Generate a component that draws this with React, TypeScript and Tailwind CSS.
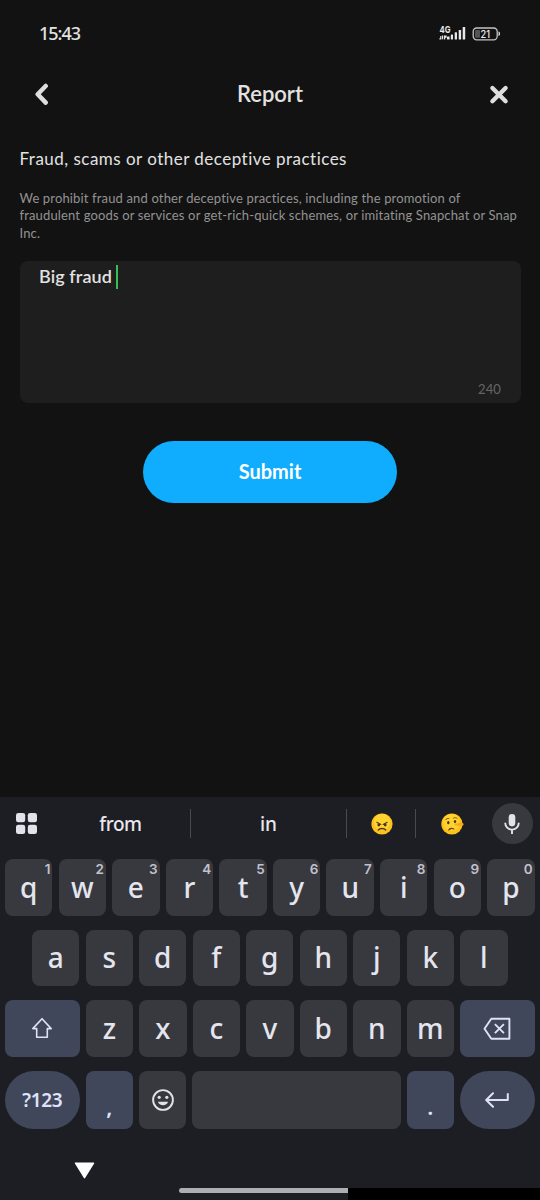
import React from 'react';

interface KeyProps {
  label: string;
  hint?: string;
}

const Key: React.FC<KeyProps> = ({ label, hint }) => (
  <button className="relative flex h-full w-[47.4px] items-center justify-center rounded-lg bg-[#38393e] text-[28px] leading-none font-medium text-[#e4e5ee]">
    <span className="-mt-0.5">{label}</span>
    {hint && <span className="absolute top-[4px] right-[2px] font-[Inter,sans-serif] text-[13.5px] leading-none font-semibold text-[#c0c1cd]">{hint}</span>}
  </button>
);

const SignalIcon = () => (
  <svg className="h-[17px] w-[28px]" viewBox="0 0 28 17" fill="#e8e8e8">
    <path d="M1.2 11h1.2v3.6H.4v-1.4h.8zM3 10.6h1.2v3.6H3zM5 10.6h2.6v2.2H6.2v1.6H5z" />
    <rect x="8" y="11.6" width="2.6" height="3" rx=".5" />
    <rect x="11.8" y="9.5" width="2.2" height="5.1" rx=".5" />
    <rect x="15.7" y="7.3" width="2.3" height="7.3" rx=".5" />
    <rect x="19.7" y="5" width="2.4" height="9.6" rx=".5" />
    <rect x="23.7" y="2" width="2.5" height="12.6" rx=".5" />
    <text x="0.5" y="8.2" fontSize="9.5" fontWeight="700" fontFamily="Inter, sans-serif" textLength="11" lengthAdjust="spacingAndGlyphs">4G</text>
  </svg>
);

const BatteryIcon = () => (
  <svg className="h-[14px] w-[30px]" viewBox="0 0 30 14">
    <rect x="1.2" y="1" width="24" height="11.8" rx="3.5" fill="none" stroke="#c4c4c4" strokeWidth="1.3" />
    <rect x="3" y="3" width="5" height="7.8" rx="1" fill="#555" />
    <path d="M26.5 4.5c1.2.4 1.5 1 1.5 2.3s-.3 1.9-1.5 2.3z" fill="#ddd" />
    <text x="8.5" y="10.6" fontSize="10" fontWeight="500" fill="#eee" fontFamily="Inter, sans-serif" textLength="9.5" lengthAdjust="spacingAndGlyphs">21</text>
  </svg>
);

const AngryFace = () => (
  <svg className="h-[22px] w-[22px]" viewBox="0 0 22 22">
    <circle cx="11" cy="11" r="10.6" fill="#fcc21b" />
    <circle cx="11" cy="9" r="8.2" fill="#ffd32f" />
    <g fill="none" stroke="#493522" strokeLinecap="round">
      <path d="M5.8 9.3l4 2.1M16.2 9.3l-4 2.1" strokeWidth="1.1" />
      <path d="M7.3 17c1.5-2 5.9-2 7.4 0" strokeWidth="1.3" />
    </g>
    <circle cx="7.8" cy="12" r="1.4" fill="#493522" />
    <circle cx="14.2" cy="12" r="1.4" fill="#493522" />
  </svg>
);

const LyingFace = () => (
  <svg className="h-[22px] w-[23px]" viewBox="0 0 23 22">
    <circle cx="10.9" cy="11" r="10.6" fill="#fcc21b" />
    <circle cx="10.5" cy="9.5" r="8.4" fill="#ffd32f" />
    <path d="M13.5 10.5c3 0 5.5-1.3 8-.5 1.4.6 1.4 2.3 0 2.8-2.5.7-5-.1-8-.5z" fill="#f9a919" />
    <ellipse cx="7.3" cy="9.7" rx="1.2" ry="1.6" fill="#493522" />
    <ellipse cx="14" cy="8.5" rx="1.2" ry="1.5" fill="#493522" />
    <g fill="none" stroke="#6b4a1b" strokeLinecap="round">
      <path d="M4.5 6.8c.8-1.1 2-1.5 3.3-1.3M12.5 5c1.4-.6 2.7-.4 3.7.5" strokeWidth=".9" />
      <path d="M7.8 17c1-1.7 3.3-2 5-1" strokeWidth="1.3" />
    </g>
  </svg>
);

const Keyboard = () => (
  <div className="flex h-[403px] flex-col bg-[#1d1e23] font-['Noto_Sans',sans-serif]">
    <div className="flex h-[53px] items-center">
      <svg className="ml-4 h-[21px] w-[21px]" viewBox="0 0 21 21" fill="#e2e3ea">
        <rect width="9.2" height="9.2" rx="2.3" />
        <rect x="11.8" width="9.2" height="9.2" rx="2.3" />
        <rect y="11.8" width="9.2" height="9.2" rx="2.3" />
        <rect x="11.8" y="11.8" width="9.2" height="9.2" rx="2.3" />
      </svg>
      <span className="ml-[13px] w-[140px] pt-px pl-px text-center text-[19px] font-medium tracking-[-0.4px] text-[#e8e8ee]">from</span>
      <div className="h-[29px] w-px bg-[#494a50]" />
      <span className="w-[155px] pt-px text-center text-[19px] font-medium text-[#e8e8ee]">in</span>
      <div className="h-[29px] w-px bg-[#494a50]" />
      <div className="flex w-[68px] justify-center pl-[2px]"><AngryFace /></div>
      <div className="h-[29px] w-px bg-[#494a50]" />
      <div className="flex w-[70px] justify-center pl-[2px]"><LyingFace /></div>
      <button className="ml-[6px] flex h-[41px] w-[41px] items-center justify-center rounded-full bg-[#38393e]">
        <svg className="-ml-px h-[22px] w-[18px]" viewBox="0 0 18 22">
          <rect x="5.7" y="1" width="6.6" height="12.4" rx="3.3" fill="#e2e3ea" />
          <path d="M2.2 9.8a6.8 6.8 0 0 0 13.6 0M9 16.5v4.5" fill="none" stroke="#e2e3ea" strokeWidth="1.9" />
        </svg>
      </button>
    </div>

    <div className="mt-[9px] flex h-[57px] justify-between pr-[5.4px] pl-[5px]">
      {'qwertyuiop'.split('').map((c, i) => <Key key={c} label={c} hint={String((i + 1) % 10)} />)}
    </div>
    <div className="mt-[14px] flex h-[56px] justify-between pr-[32.4px] pl-[32px]">
      {'asdfghjkl'.split('').map((c) => <Key key={c} label={c} />)}
    </div>
    <div className="mt-[14px] flex h-[57px] justify-between pr-[5.4px] pl-[5px]">
      <button className="flex w-[74.5px] items-center justify-center rounded-lg bg-[#41475b]">
        <svg className="-mt-px h-[22px] w-[22px]" viewBox="0 0 22 22" fill="none" stroke="#dfe2f5" strokeWidth="1.6" strokeLinejoin="round">
          <path d="M11 1.7L20.2 11.6H16.3V20.2H5.7V11.6H1.8z" />
        </svg>
      </button>
      {'zxcvbnm'.split('').map((c) => <Key key={c} label={c} />)}
      <button className="flex w-[74.5px] items-center justify-center rounded-lg bg-[#41475b]">
        <svg className="h-[24px] w-[28px]" viewBox="0 0 28 24" fill="none" stroke="#dfe2f5" strokeWidth="1.9" strokeLinejoin="round">
          <path d="M8.3 1.7H26.4V21.7H8.3L1.5 11.7z" />
          <path d="M11.9 7.2l9 9M20.9 7.2l-9 9" />
        </svg>
      </button>
    </div>
    <div className="mt-[14px] flex h-[58px] justify-between pr-[5.4px] pl-[5px] text-[#dfe2f9]">
      <button className="w-[74.5px] rounded-full bg-[#41475b] text-[19px] font-semibold tracking-[-0.4px]">?123</button>
      <button className="w-[47.4px] rounded-lg bg-[#41475b] pt-3 text-[22px] font-semibold">,</button>
      <button className="flex w-[47.4px] items-center justify-center rounded-lg bg-[#38393e]">
        <svg className="-mt-px h-[22px] w-[22px]" viewBox="0 0 22 22">
          <circle cx="11" cy="11" r="9.9" fill="none" stroke="#e2e3ea" strokeWidth="1.9" />
          <circle cx="7.2" cy="8.3" r="1.6" fill="#e2e3ea" />
          <circle cx="14.8" cy="8.3" r="1.6" fill="#e2e3ea" />
          <path d="M6 12.8h10c-.8 4.5-9.2 4.5-10 0z" fill="#e2e3ea" />
        </svg>
      </button>
      <button className="w-[208.3px] rounded-lg bg-[#38393e]" />
      <button className="w-[47.4px] rounded-lg bg-[#41475b] pt-3 text-[22px] font-semibold">.</button>
      <button className="flex w-[74.5px] items-center justify-center rounded-full bg-[#41475b]">
        <svg className="h-[16px] w-[24px]" viewBox="0 0 24 16" fill="none" stroke="#dfe2f5" strokeWidth="2" strokeLinecap="round" strokeLinejoin="round">
          <path d="M8 1.2L1.2 8L8 14.8M1.2 8H22.8V2" />
        </svg>
      </button>
    </div>

    <svg className="mt-[33px] ml-[74px] h-[17px] w-[21px]" viewBox="0 0 21 17" fill="#fff" stroke="#fff" strokeWidth="1.5" strokeLinejoin="round">
      <path d="M1.5 1.2H19.5L10.5 15.6z" />
    </svg>
    <div className="mt-auto flex h-[12px]">
      <div className="ml-[178.5px] h-[5px] w-[169.5px] rounded-l-full bg-[#adaeb1]" />
      <div className="h-full flex-1 bg-black" />
    </div>
  </div>
);

const App: React.FC = () => {
  return (
    <div className="flex h-[1200px] w-[540px] flex-col overflow-hidden bg-[#121212] font-[Lato,sans-serif] text-[#e2e2e2]">
      <div className="flex h-[67px] items-center pr-[38px] pl-[39px]">
        <span className="-mt-0.5 font-['Noto_Sans',sans-serif] text-[18px] leading-none font-medium tracking-[-1px]">15:43</span>
        <div className="ml-auto flex items-center gap-[5px]">
          <SignalIcon />
          <BatteryIcon />
        </div>
      </div>

      <header className="flex h-[54px] items-center justify-between pr-[30px] pl-[34px]">
        <button>
          <svg className="h-[22px] w-[15px]" viewBox="0 0 15 22" fill="none" stroke="#dedede" strokeWidth="4.5" strokeLinecap="round" strokeLinejoin="round">
            <path d="M11.7 3L3.7 11.2L11.7 19.6" />
          </svg>
        </button>
        <h1 className="pl-[3px] text-[22px] leading-none font-semibold">Report</h1>
        <button>
          <svg className="h-[22px] w-[22px]" viewBox="0 0 22 22" fill="none" stroke="#dedede" strokeWidth="4.4" strokeLinecap="round">
            <path d="M4.4 5L17.6 18.2M17.6 5L4.4 18.2" />
          </svg>
        </button>
      </header>

      <main className="flex flex-col px-[19.5px]">
        <h2 className="mt-[27px] text-[17px] leading-[22px] tracking-[0.48px] whitespace-nowrap">Fraud, scams or other deceptive practices</h2>
        <p className="mt-[20px] text-[13px] leading-[17.3px] tracking-[0.15px] whitespace-nowrap text-[#929292]">
          We prohibit fraud and other deceptive practices, including the promotion of<br />
          fraudulent goods or services or get-rich-quick schemes, or imitating Snapchat or Snap<br />
          Inc.
        </p>
        <div className="mt-[19.1px] flex h-[142px] flex-col justify-between rounded-lg bg-[#1e1e1e] px-[19.5px] pt-1 pb-[6px]">
          <div className="flex items-center">
            <span className="-mt-px text-[18px] leading-6 font-semibold tracking-[0.1px]">Big fraud</span>
            <div className="ml-1 h-6 w-[2px] bg-[#35bd57]" />
          </div>
          <span className="self-end text-[13px] leading-4 tracking-[0.1px] text-[#666]">240</span>
        </div>
        <button className="mt-[38px] h-[62px] w-[254.5px] self-center rounded-full bg-[#10adff] pb-px text-[20px] font-bold text-white">Submit</button>
      </main>

      <div className="mt-auto">
        <Keyboard />
      </div>
    </div>
  );
};

export default App;
